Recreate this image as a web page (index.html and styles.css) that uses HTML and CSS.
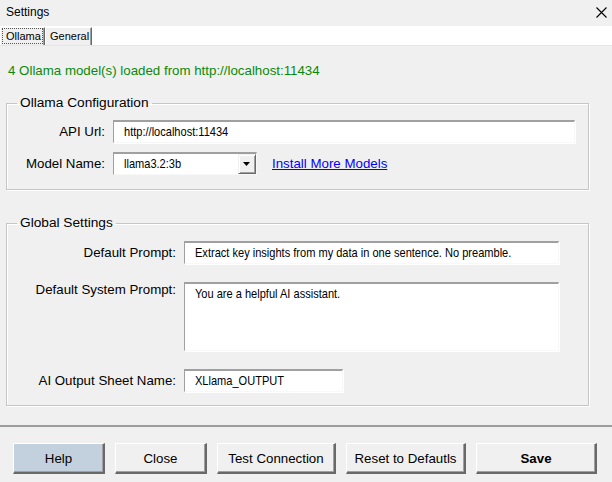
FILE: index.html
```html
<!DOCTYPE html>
<html>
<head>
<meta charset="utf-8">
<title>Settings</title>
<link rel="stylesheet" href="styles.css">
</head>
<body>
<div class="window">
  <div class="titlebar">
    <span class="title">Settings</span>
    <svg class="close" width="11" height="11" viewBox="0 0 11 11"><path d="M0.5 0.5 L10.5 10.5 M10.5 0.5 L0.5 10.5" stroke="#000" stroke-width="1.1" fill="none"/></svg>
  </div>
  <div class="tabs">
    <div class="tab active"><span class="focus">Ollama</span></div>
    <div class="tab tab-general">General</div>
  </div>
  <div class="content">
    <div class="status">4 Ollama model(s) loaded from http://localhost:11434</div>
    <fieldset class="group group-ollama">
      <legend>Ollama Configuration</legend>
      <div class="form form-ollama">
        <label class="lbl">API Url:</label>
        <div class="field field-url"><span class="txt">http://localhost:11434</span></div>
        <label class="lbl">Model Name:</label>
        <div class="row-model">
          <div class="select">
            <span class="select-text"><span class="txt">llama3.2:3b</span></span>
            <span class="select-btn"><svg width="8" height="5" viewBox="0 0 8 5"><path d="M0 0 H7 L3.5 4 Z" fill="#000"/></svg></span>
          </div>
          <a class="link" href="#">Install More Models</a>
        </div>
      </div>
    </fieldset>
    <fieldset class="group group-global">
      <legend>Global Settings</legend>
      <div class="form form-global">
        <label class="lbl">Default Prompt:</label>
        <div class="field field-prompt"><span class="txt">Extract key insights from my data in one sentence. No preamble.</span></div>
        <label class="lbl lbl-top">Default System Prompt:</label>
        <div class="field field-area"><span class="txt">You are a helpful AI assistant.</span></div>
        <label class="lbl">AI Output Sheet Name:</label>
        <div class="field field-sheet"><span class="txt">XLlama_OUTPUT</span></div>
      </div>
    </fieldset>
  </div>
  <div class="footer">
    <button class="btn btn-help">Help</button>
    <button class="btn btn-close">Close</button>
    <button class="btn btn-test">Test Connection</button>
    <button class="btn btn-reset">Reset to Defautls</button>
    <button class="btn btn-save">Save</button>
  </div>
</div>
</body>
</html>
```
FILE: styles.css
```css
* { box-sizing: border-box; }
html, body { margin: 0; padding: 0; }
body {
  width: 612px;
  height: 482px;
  overflow: hidden;
  background: #f0f0f0;
  font-family: "Liberation Sans", Arial, sans-serif;
  font-size: 13.3px;
  color: #000;
}
.window { width: 612px; height: 482px; display: flex; flex-direction: column; }

.titlebar {
  height: 26px;
  display: flex;
  align-items: center;
  justify-content: space-between;
  padding: 0 5px 2px 6px;
  background: #f0f0f0;
}
.title { font-size: 12px; }

.tabs {
  height: 20px;
  background: #fff;
  display: flex;
  align-items: flex-start;
  border-bottom: 1px solid #e6e6e6;
}
.tab {
  font-size: 11px;
  height: 18px;
  margin-top: 1px;
  line-height: 17px;
  background: #f0f0f0;
  border-left: 1px solid #fff;
  border-top: 1px solid #fff;
  border-right: 1px solid #696969;
  box-shadow: inset -1px 0 0 #a0a0a0;
}
.tab.active {
  padding: 0 1px;
  width: 45px;
}
.tab.active .focus {
  display: block;
  height: 16px;
  line-height: 14px;
  padding: 0 3px;
  border: 1px dotted #555;
}
.tab-general {
  width: 47px;
  padding: 0 0 0 4px;
}

.content {
  flex: 1;
  padding: 17px 23px 0 6px;
  border-bottom: 2px solid #9d9d9d;
}
.status {
  color: #0a8a0a;
  line-height: 16px;
  padding-left: 2px;
  height: 16px;
}

.group {
  margin: 0;
  padding: 0;
  border: 1px solid #c6c6c6;
  box-shadow: 1px 1px 0 #fff, inset 1px 1px 0 #fff;
  min-width: 0;
}
.group legend {
  font-size: 13.7px;
  line-height: 16px;
  padding: 0 3px;
  margin-left: 10px;
}
.group-ollama { margin-top: 16px; height: 95px; }
.group-global { margin-top: 25px; height: 191px; }

.form { display: grid; align-items: center; }
.form-ollama {
  grid-template-columns: 98px 1fr;
  column-gap: 8px;
  row-gap: 9px;
  padding: 9px 13px 0 0;
}
.form-global {
  grid-template-columns: 169px 375px;
  column-gap: 8px;
  row-gap: 18px;
  padding: 10px 0 0 0;
}
.lbl { text-align: right; white-space: nowrap; line-height: 16px; }
.lbl-top { align-self: start; padding-top: 0; }

.field {
  background: #fff;
  border-top: 2px solid #a0a0a0;
  border-left: 1px solid #a0a0a0;
  border-right: 1px solid #f8f8f8;
  border-bottom: 1px solid #f8f8f8;
  box-shadow: 1px 1px 0 #fff;
  padding: 0 0 0 10px;
  white-space: nowrap;
  overflow: hidden;
  height: 23px;
  line-height: 20px;
}
.txt {
  display: inline-block;
  font-size: 13px;
  transform: scaleX(0.85);
  transform-origin: left center;
}
.field-url { width: 462px; }
.field-prompt { width: 375px; }
.field-area { height: 69px; width: 375px; padding-top: 1px; line-height: 18px; }
.field-sheet { width: 159px; }

.row-model { display: flex; align-items: center; }
.select {
  width: 144px;
  height: 23px;
  display: flex;
  background: #fff;
  border-top: 2px solid #a0a0a0;
  border-left: 1px solid #a0a0a0;
  border-right: 1px solid #f8f8f8;
  border-bottom: 1px solid #f8f8f8;
}
.select-text {
  flex: 1;
  padding-left: 10px;
  line-height: 20px;
}
.select-btn {
  width: 18px;
  height: 20px;
  background: #f0f0f0;
  border-top: 1px solid #f0f0f0;
  border-left: 1px solid #f0f0f0;
  border-right: 1px solid #696969;
  border-bottom: 1px solid #696969;
  box-shadow: inset 1px 1px 0 #fff, inset -1px -1px 0 #a0a0a0;
  display: flex;
  align-items: center;
  justify-content: center;
}
.link {
  margin-left: 15px;
  color: #0000ff;
  text-decoration: underline;
}

.footer {
  height: 55px;
  display: flex;
  align-items: flex-start;
  gap: 10px;
  padding: 16px 0 0 13px;
  background: #f0f0f0;
}
.btn {
  height: 31px;
  font-family: "Liberation Sans", Arial, sans-serif;
  font-size: 13.3px;
  color: #000;
  background: #f0f0f0;
  border-style: solid;
  border-width: 1px 2px 2px 1px;
  border-color: #fff #696969 #696969 #fff;
  box-shadow: inset -1px -1px 0 #a0a0a0;
  padding: 0;
}
.btn-help { width: 92px; background: #c3d0dd; }
.btn-close { width: 92px; }
.btn-test { width: 119px; }
.btn-reset { width: 120px; }
.btn-save { width: 121px; font-weight: bold; }
```
